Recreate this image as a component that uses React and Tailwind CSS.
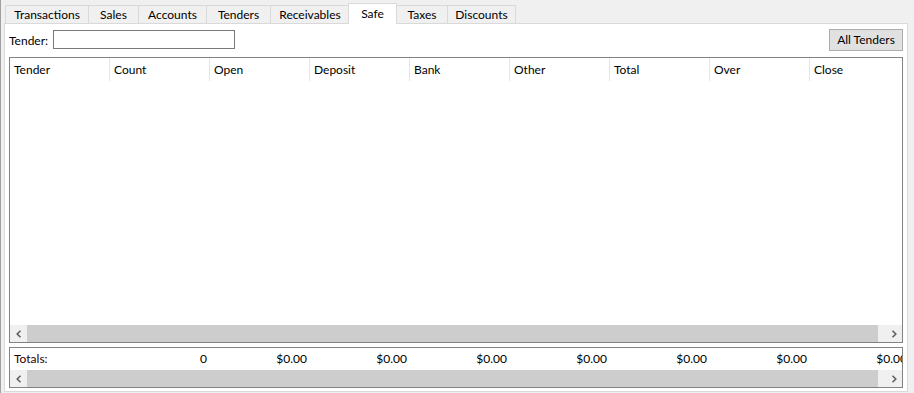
import React from "react";

const tabs = [
  { label: "Transactions", w: 83 },
  { label: "Sales", w: 50 },
  { label: "Accounts", w: 68 },
  { label: "Tenders", w: 64 },
  { label: "Receivables", w: 79 },
  { label: "Safe", w: 48, active: true },
  { label: "Taxes", w: 51 },
  { label: "Discounts", w: 69 },
];

const cols = ["Tender", "Count", "Open", "Deposit", "Bank", "Other", "Total", "Over", "Close"];
const totals = ["Totals:", "0", "$0.00", "$0.00", "$0.00", "$0.00", "$0.00", "$0.00", "$0.00"];

function HScroll() {
  return (
    <div className="flex h-[17px] shrink-0 bg-[#f0f0f0]">
      <div className="w-[17px] flex items-center justify-center">
        <svg width="6" height="8" viewBox="0 0 6 8"><path d="M4.5 0.8 L1.2 4 L4.5 7.2" fill="none" stroke="#606060" strokeWidth="1.6" /></svg>
      </div>
      <div className="flex-1 bg-[#cdcdcd]" />
      <div className="w-[7px]" />
      <div className="w-[17px] flex items-center justify-center">
        <svg width="6" height="8" viewBox="0 0 6 8"><path d="M1.5 0.8 L4.8 4 L1.5 7.2" fill="none" stroke="#606060" strokeWidth="1.6" /></svg>
      </div>
    </div>
  );
}

export default function App() {
  return (
    <div
      className="w-[914px] h-[393px] bg-[#f0f0f0] flex flex-col overflow-hidden border-l border-[#a0a0a0] text-[12px] text-black"
      style={{ fontFamily: "Lato, 'Liberation Sans', sans-serif" }}
    >
      <div className="flex items-end h-[23px] pl-[4px] shrink-0">
        {tabs.map((t) =>
          t.active ? (
            <div
              key={t.label}
              className="relative z-10 h-[21px] -mb-px bg-white border border-b-0 border-[#d9d9d9] flex items-center justify-center pb-[1px]"
              style={{ width: t.w + 1, marginLeft: -1, marginRight: -1 }}
            >
              {t.label}
            </div>
          ) : (
            <div
              key={t.label}
              className="h-[18px] bg-[#f0f0f0] border border-b-0 border-r-0 border-[#d9d9d9] flex items-center justify-center last:border-r"
              style={{ width: t.w }}
            >
              {t.label}
            </div>
          )
        )}
      </div>
      <div className="ml-[3px] w-[904px] h-[369px] bg-white border border-[#d9d9d9] flex flex-col px-[4px] pt-[5px] shrink-0">
        <div className="flex items-start h-[22px] shrink-0">
          <span className="w-[44px] shrink-0 mt-[3px]">Tender:</span>
          <div className="mt-[1px] w-[182px] h-[19px] border border-[#7a7a7a] bg-white" />
          <div className="flex-1" />
          <button className="w-[74px] h-[22px] bg-[#e1e1e1] border border-[#adadad] text-[12px] text-black" style={{ fontFamily: "inherit" }}>
            All Tenders
          </button>
        </div>
        <div className="mt-[6px] h-[286px] border border-[#828282] flex flex-col shrink-0 overflow-hidden">
          <div className="flex h-[23px] shrink-0">
            {cols.map((c, i) => (
              <div
                key={c}
                className={"w-[100px] shrink-0 pl-[4px] flex items-center " + (i < cols.length - 1 ? "border-r border-[#e5e5e5]" : "")}
              >
                {c}
              </div>
            ))}
          </div>
          <div className="flex-1" />
          <HScroll />
        </div>
        <div className="mt-[4px] h-[41px] border border-[#828282] flex flex-col shrink-0 overflow-hidden">
          <div className="flex h-[22px] shrink-0">
            {totals.map((v, i) => (
              <div
                key={i}
                className={"w-[100px] shrink-0 flex items-center " + (i === 0 ? "pl-[4px] text-[#2a0000]" : "justify-end pr-[3px]")}
              >
                {v}
              </div>
            ))}
          </div>
          <HScroll />
        </div>
      </div>
    </div>
  );
}
